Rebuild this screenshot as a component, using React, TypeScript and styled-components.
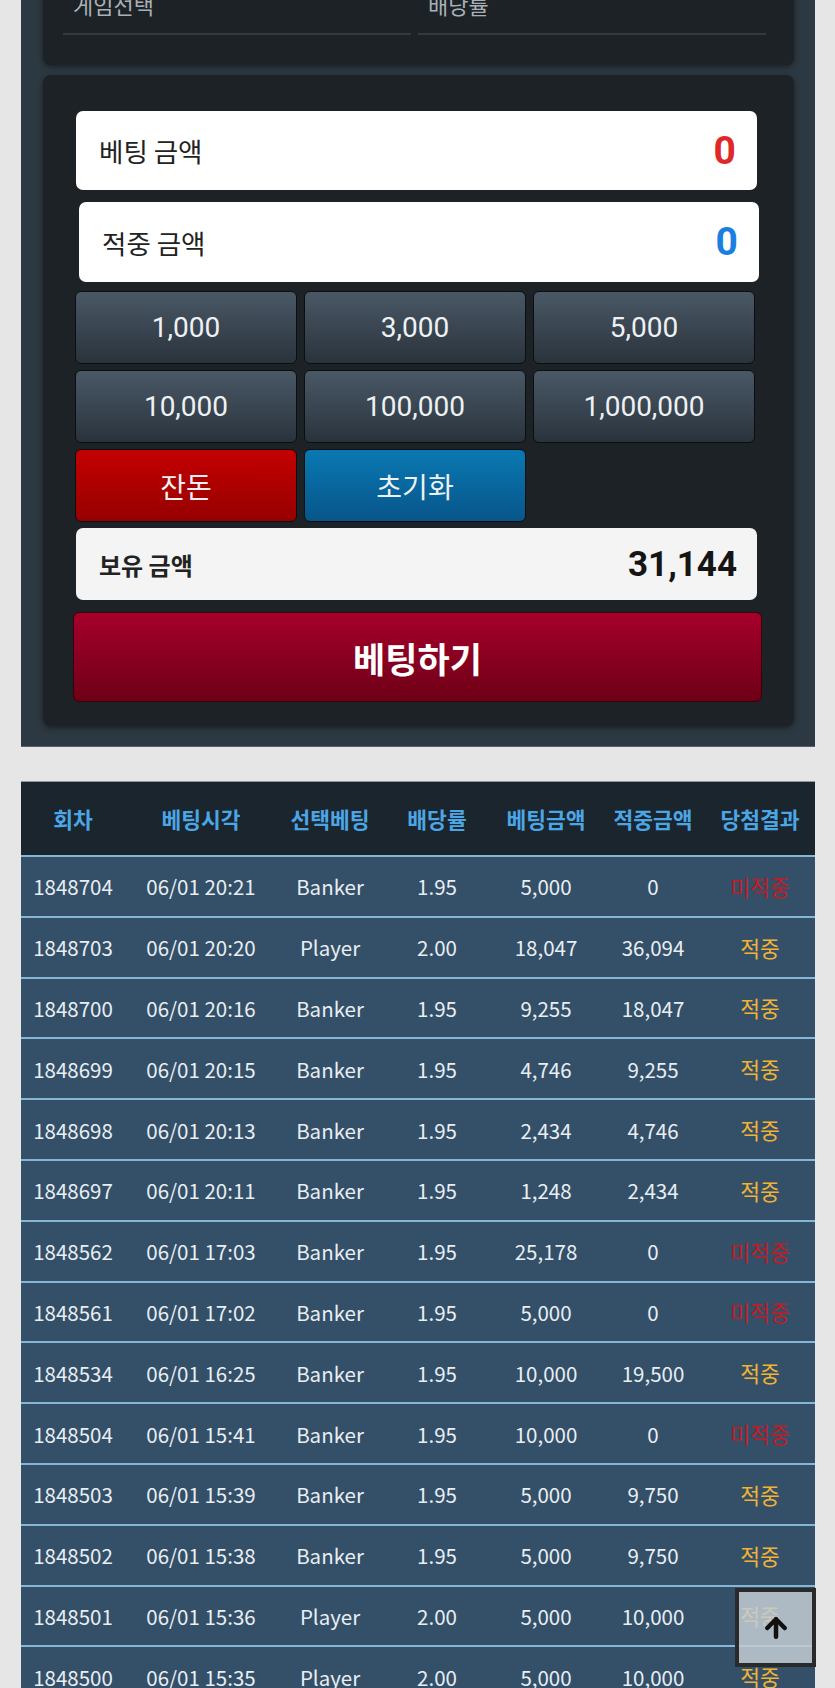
import React from 'react'
import styled, { createGlobalStyle } from 'styled-components'
import { ArrowUp } from 'lucide-react'

const GlobalStyle = createGlobalStyle`
  html, body {
    margin: 0;
    padding: 0;
    background: #e6e6e6;
    font-family: 'Noto Sans CJK KR', 'Noto Sans', sans-serif;
  }
`

const rows = [
  ['1848704', '06/01 20:21', 'Banker', '1.95', '5,000', '0', false],
  ['1848703', '06/01 20:20', 'Player', '2.00', '18,047', '36,094', true],
  ['1848700', '06/01 20:16', 'Banker', '1.95', '9,255', '18,047', true],
  ['1848699', '06/01 20:15', 'Banker', '1.95', '4,746', '9,255', true],
  ['1848698', '06/01 20:13', 'Banker', '1.95', '2,434', '4,746', true],
  ['1848697', '06/01 20:11', 'Banker', '1.95', '1,248', '2,434', true],
  ['1848562', '06/01 17:03', 'Banker', '1.95', '25,178', '0', false],
  ['1848561', '06/01 17:02', 'Banker', '1.95', '5,000', '0', false],
  ['1848534', '06/01 16:25', 'Banker', '1.95', '10,000', '19,500', true],
  ['1848504', '06/01 15:41', 'Banker', '1.95', '10,000', '0', false],
  ['1848503', '06/01 15:39', 'Banker', '1.95', '5,000', '9,750', true],
  ['1848502', '06/01 15:38', 'Banker', '1.95', '5,000', '9,750', true],
  ['1848501', '06/01 15:36', 'Player', '2.00', '5,000', '10,000', true],
  ['1848500', '06/01 15:35', 'Player', '2.00', '5,000', '10,000', true],
] as const

const headers = ['회차', '베팅시각', '선택베팅', '배당률', '베팅금액', '적중금액', '당첨결과']
const colWidths = [104, 152, 106, 108, 110, 104, 110]

const App = () => {
  return (
    <Page>
      <GlobalStyle />
      <Panel>
        <Card className='top'>
          <Fields>
            <Field>게임선택</Field>
            <Field>배당률</Field>
          </Fields>
        </Card>
        <Card className='bet'>
          <AmountBox className='first'>
            <span>베팅 금액</span>
            <Amount color='#e02828'>0</Amount>
          </AmountBox>
          <AmountBox className='second'>
            <span>적중 금액</span>
            <Amount color='#1a7fe0'>0</Amount>
          </AmountBox>
          <ChipGrid>
            {['1,000', '3,000', '5,000', '10,000', '100,000', '1,000,000'].map((v) => (
              <Chip key={v}>{v}</Chip>
            ))}
            <Chip variant='red'>잔돈</Chip>
            <Chip variant='blue'>초기화</Chip>
          </ChipGrid>
          <Balance>
            <span>보유 금액</span>
            <strong>31,144</strong>
          </Balance>
          <BetButton>베팅하기</BetButton>
        </Card>
      </Panel>

      <Table>
        <colgroup>
          {colWidths.map((w, i) => (
            <col key={i} style={{ width: w }} />
          ))}
        </colgroup>
        <thead>
          <tr>
            {headers.map((h) => (
              <Th key={h}>{h}</Th>
            ))}
          </tr>
        </thead>
        <tbody>
          {rows.map((r) => (
            <tr key={r[0]}>
              <Td>{r[0]}</Td>
              <Td>{r[1]}</Td>
              <Td>{r[2]}</Td>
              <Td>{r[3]}</Td>
              <Td>{r[4]}</Td>
              <Td>{r[5]}</Td>
              <Result win={r[6]}>{r[6] ? '적중' : '미적중'}</Result>
            </tr>
          ))}
        </tbody>
      </Table>

      <TopButton>
        <ArrowUp size={30} strokeWidth={3.6} color='#111' />
      </TopButton>
    </Page>
  )
}

const Page = styled.div`
  padding: 0 20px 40px 21px;
  margin-top: -53px;
`

const Panel = styled.div`
  background: #2d3942;
  padding: 22px 21px 20px 22px;
  display: flex;
  flex-direction: column;
  gap: 10px;
  border-bottom: 1px solid #56636d;
`

const Card = styled.div`
  background: #1c2226;
  border-radius: 8px;
  box-shadow: 0 2px 6px rgba(0, 0, 0, 0.45);
  &.top {
    padding: 20px 28px 30px 20px;
  }
  &.bet {
    padding: 36px 32px 24px 32px;
    display: flex;
    flex-direction: column;
  }
`

const Fields = styled.div`
  display: grid;
  grid-template-columns: 1fr 1fr;
  gap: 7px;
`

const Field = styled.div`
  color: #a9b0b5;
  font-size: 22px;
  line-height: 30px;
  padding: 0 0 14px 10px;
  border-bottom: 2px solid #2f3a43;
`

const AmountBox = styled.div`
  background: #fff;
  border-radius: 7px;
  height: 79px;
  display: flex;
  align-items: center;
  justify-content: space-between;
  padding: 0 21px 0 23px;
  box-sizing: border-box;
  span {
    font-size: 26.5px;
    color: #222;
  }
  &.first {
    margin: 0 5px 0 1px;
  }
  &.second {
    margin: 12px 3px 0 4px;
    height: 80px;
  }
`

const Amount = styled.b<{ color: string }>`
  font-family: Roboto, 'Noto Sans', sans-serif;
  font-weight: 700;
  font-size: 39px;
  color: ${(p) => p.color};
`

const ChipGrid = styled.div`
  display: grid;
  grid-template-columns: repeat(3, 1fr);
  grid-auto-rows: 73px;
  column-gap: 7px;
  row-gap: 6px;
  margin: 9px 7px 0 0;
`

const Chip = styled.button<{ variant?: 'red' | 'blue' }>`
  border: 1px solid #0c0f11;
  border-radius: 6px;
  color: #eef1f3;
  font-family: ${(p) => (p.variant ? "'Noto Sans CJK KR', sans-serif" : "Roboto, 'Noto Sans', sans-serif")};
  font-size: 28px;
  background: ${(p) =>
    p.variant === 'red'
      ? 'linear-gradient(#c40000, #960000)'
      : p.variant === 'blue'
      ? 'linear-gradient(#0a78b2, #07568a)'
      : 'linear-gradient(#4a5866, #29333c)'};
  cursor: pointer;
`

const Balance = styled.div`
  margin: 6px 5px 0 1px;
  height: 72px;
  background: #f4f4f4;
  border-radius: 7px;
  display: flex;
  align-items: center;
  justify-content: space-between;
  padding: 0 20px 0 23px;
  span {
    font-size: 24px;
    font-weight: 700;
    color: #222;
  }
  strong {
    font-family: Roboto, 'Noto Sans', sans-serif;
    font-size: 35px;
    font-weight: 700;
    color: #151515;
  }
`

const BetButton = styled.button`
  margin: 12px 0 0 -2px;
  height: 90px;
  border: 1px solid #3a0008;
  border-radius: 6px;
  background: linear-gradient(#a6002a, #6e0016);
  color: #fff;
  font-family: 'Noto Sans CJK KR', sans-serif;
  font-size: 35px;
  font-weight: 700;
  cursor: pointer;
`

const Table = styled.table`
  margin-top: 34px;
  width: 100%;
  table-layout: fixed;
  border-collapse: collapse;
  font-family: 'Noto Sans CJK KR', 'Noto Sans', sans-serif;
`

const Th = styled.th`
  background: #1b252d;
  color: #4ba6e6;
  font-size: 21.5px;
  font-weight: 700;
  height: 73px;
  padding: 0;
  border-bottom: 2px solid #86b6d6;
  border-top: 1px solid #8d979f;
`

const Td = styled.td`
  background: #345068;
  color: #e8eef3;
  font-size: 20.5px;
  text-align: center;
  height: 58.8px;
  padding: 0;
  white-space: nowrap;
  border-bottom: 2px solid #86b6d6;
`

const Result = styled(Td)<{ win: boolean }>`
  color: ${(p) => (p.win ? '#f2b233' : '#c41a22')};
  font-size: 21.5px;
`

const TopButton = styled.button`
  position: fixed;
  right: 19px;
  bottom: 21px;
  width: 81px;
  height: 79px;
  box-sizing: border-box;
  border: 4px solid #2a2a2a;
  background: rgba(196, 204, 212, 0.85);
  display: flex;
  align-items: center;
  justify-content: center;
  padding: 0;
  cursor: pointer;
`

export default App
